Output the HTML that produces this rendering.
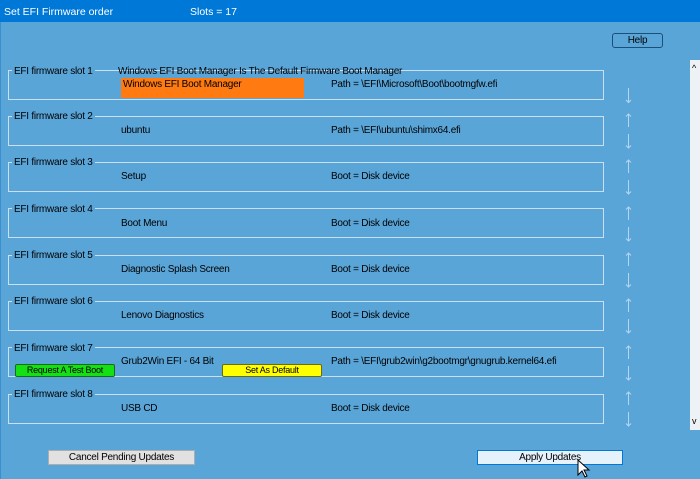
<!DOCTYPE html>
<html><head><meta charset="utf-8"><style>
*{margin:0;padding:0;box-sizing:border-box}
body{width:700px;height:479px;overflow:hidden;background:#5aa5d8;font-family:"Liberation Sans",sans-serif;font-size:10px;letter-spacing:-0.25px;color:#000;position:relative}
.t{position:absolute;white-space:nowrap;line-height:13px}
.title{position:absolute;left:0;top:0;width:700px;height:22px;background:#0078d7;color:#fff;font-size:10.5px;letter-spacing:0}
.box{position:absolute;left:8px;width:596px;height:30px;border:1px solid #c8e0f2}
.lbl{position:absolute;left:12px;background:#5aa5d8;padding:0 2px;line-height:13px;white-space:nowrap}
.btn{position:absolute;text-align:center;line-height:13px;white-space:nowrap}
</style></head><body>
<div style="position:absolute;left:0;top:0;width:1px;height:479px;background:#3b8ed0"></div>
<div class="title"><span class="t" style="left:4px;top:5px;line-height:14px">Set EFI Firmware order</span><span class="t" style="left:190px;top:5px;line-height:14px">Slots = 17</span></div>
<div class="btn" style="left:612px;top:33px;width:51px;height:15px;border:1px solid #1a4f7a;border-radius:3px;background:#5aa5d8">Help</div>
<div style="position:absolute;left:690px;top:60px;width:10px;height:370px;background:#eef2f5"></div>
<div class="t" style="left:692px;top:62px;font-size:9px">^</div>
<div class="t" style="left:692px;top:415px;font-size:9px">v</div>

<div class="box" style="top:70px"></div><div class="lbl" style="top:65px">EFI firmware slot 1</div>
<div class="t" style="left:118px;top:65px">Windows EFI Boot Manager Is The Default Firmware Boot Manager</div>
<div style="position:absolute;left:121px;top:78px;width:183px;height:20px;background:#ff7b12"></div>
<div class="t" style="left:123px;top:78px">Windows EFI Boot Manager</div>
<div class="t" style="left:331px;top:78px">Path = \EFI\Microsoft\Boot\bootmgfw.efi</div>

<div class="box" style="top:116px"></div><div class="lbl" style="top:110px">EFI firmware slot 2</div>
<div class="t" style="left:121px;top:124px">ubuntu</div><div class="t" style="left:331px;top:124px">Path = \EFI\ubuntu\shimx64.efi</div>

<div class="box" style="top:162px"></div><div class="lbl" style="top:156px">EFI firmware slot 3</div>
<div class="t" style="left:121px;top:170px">Setup</div><div class="t" style="left:331px;top:170px">Boot = Disk device</div>

<div class="box" style="top:208px"></div><div class="lbl" style="top:203px">EFI firmware slot 4</div>
<div class="t" style="left:121px;top:217px">Boot Menu</div><div class="t" style="left:331px;top:217px">Boot = Disk device</div>

<div class="box" style="top:255px"></div><div class="lbl" style="top:249px">EFI firmware slot 5</div>
<div class="t" style="left:121px;top:263px">Diagnostic Splash Screen</div><div class="t" style="left:331px;top:263px">Boot = Disk device</div>

<div class="box" style="top:301px"></div><div class="lbl" style="top:295px">EFI firmware slot 6</div>
<div class="t" style="left:121px;top:309px">Lenovo Diagnostics</div><div class="t" style="left:331px;top:309px">Boot = Disk device</div>

<div class="box" style="top:347px"></div><div class="lbl" style="top:342px">EFI firmware slot 7</div>
<div class="t" style="left:121px;top:355px">Grub2Win EFI - 64 Bit</div><div class="t" style="left:331px;top:355px">Path = \EFI\grub2win\g2bootmgr\gnugrub.kernel64.efi</div>
<div class="btn" style="left:15px;top:364px;width:100px;height:13px;background:#14e014;border:1px solid #1a6a1a;border-radius:2px;font-size:9px;line-height:11px">Request A Test Boot</div>
<div class="btn" style="left:222px;top:364px;width:100px;height:13px;background:#ffff00;border:1px solid #6a6a1a;border-radius:2px;font-size:9px;line-height:11px">Set As Default</div>

<div class="box" style="top:394px"></div><div class="lbl" style="top:388px">EFI firmware slot 8</div>
<div class="t" style="left:121px;top:402px">USB CD</div><div class="t" style="left:331px;top:402px">Boot = Disk device</div>

<svg style="position:absolute;left:0;top:0" width="700" height="479" stroke="#b4d6ee" stroke-width="1" fill="none">
<path d="M628.5 88v14M626 100l2.5 2.5 2.5-2.5"/>
<path d="M628.5 114v13M626 116.5l2.5-2.5 2.5 2.5M628.5 134v14M626 145.5l2.5 2.5 2.5-2.5"/>
<path d="M628.5 160v13M626 162.5l2.5-2.5 2.5 2.5M628.5 180v14M626 191.5l2.5 2.5 2.5-2.5"/>
<path d="M628.5 207v13M626 209.5l2.5-2.5 2.5 2.5M628.5 227v14M626 238.5l2.5 2.5 2.5-2.5"/>
<path d="M628.5 253v13M626 255.5l2.5-2.5 2.5 2.5M628.5 273v14M626 284.5l2.5 2.5 2.5-2.5"/>
<path d="M628.5 299v13M626 301.5l2.5-2.5 2.5 2.5M628.5 319v14M626 330.5l2.5 2.5 2.5-2.5"/>
<path d="M628.5 346v13M626 348.5l2.5-2.5 2.5 2.5M628.5 366v14M626 377.5l2.5 2.5 2.5-2.5"/>
<path d="M628.5 392v13M626 394.5l2.5-2.5 2.5 2.5M628.5 412v14M626 423.5l2.5 2.5 2.5-2.5"/>
</svg>

<div class="btn" style="left:48px;top:450px;width:147px;height:15px;background:#e1e1e1;border:1px solid #adadad">Cancel Pending Updates</div>
<div class="btn" style="left:477px;top:450px;width:146px;height:15px;background:#e5f1fb;border:1px solid #0078d7">Apply Updates</div>
<svg style="position:absolute;left:577px;top:459px" width="14" height="20"><path d="M1 1v15l4-4 3 6 2-1-3-6h5z" fill="#fff" stroke="#000" stroke-width="1"/></svg>
</body></html>
